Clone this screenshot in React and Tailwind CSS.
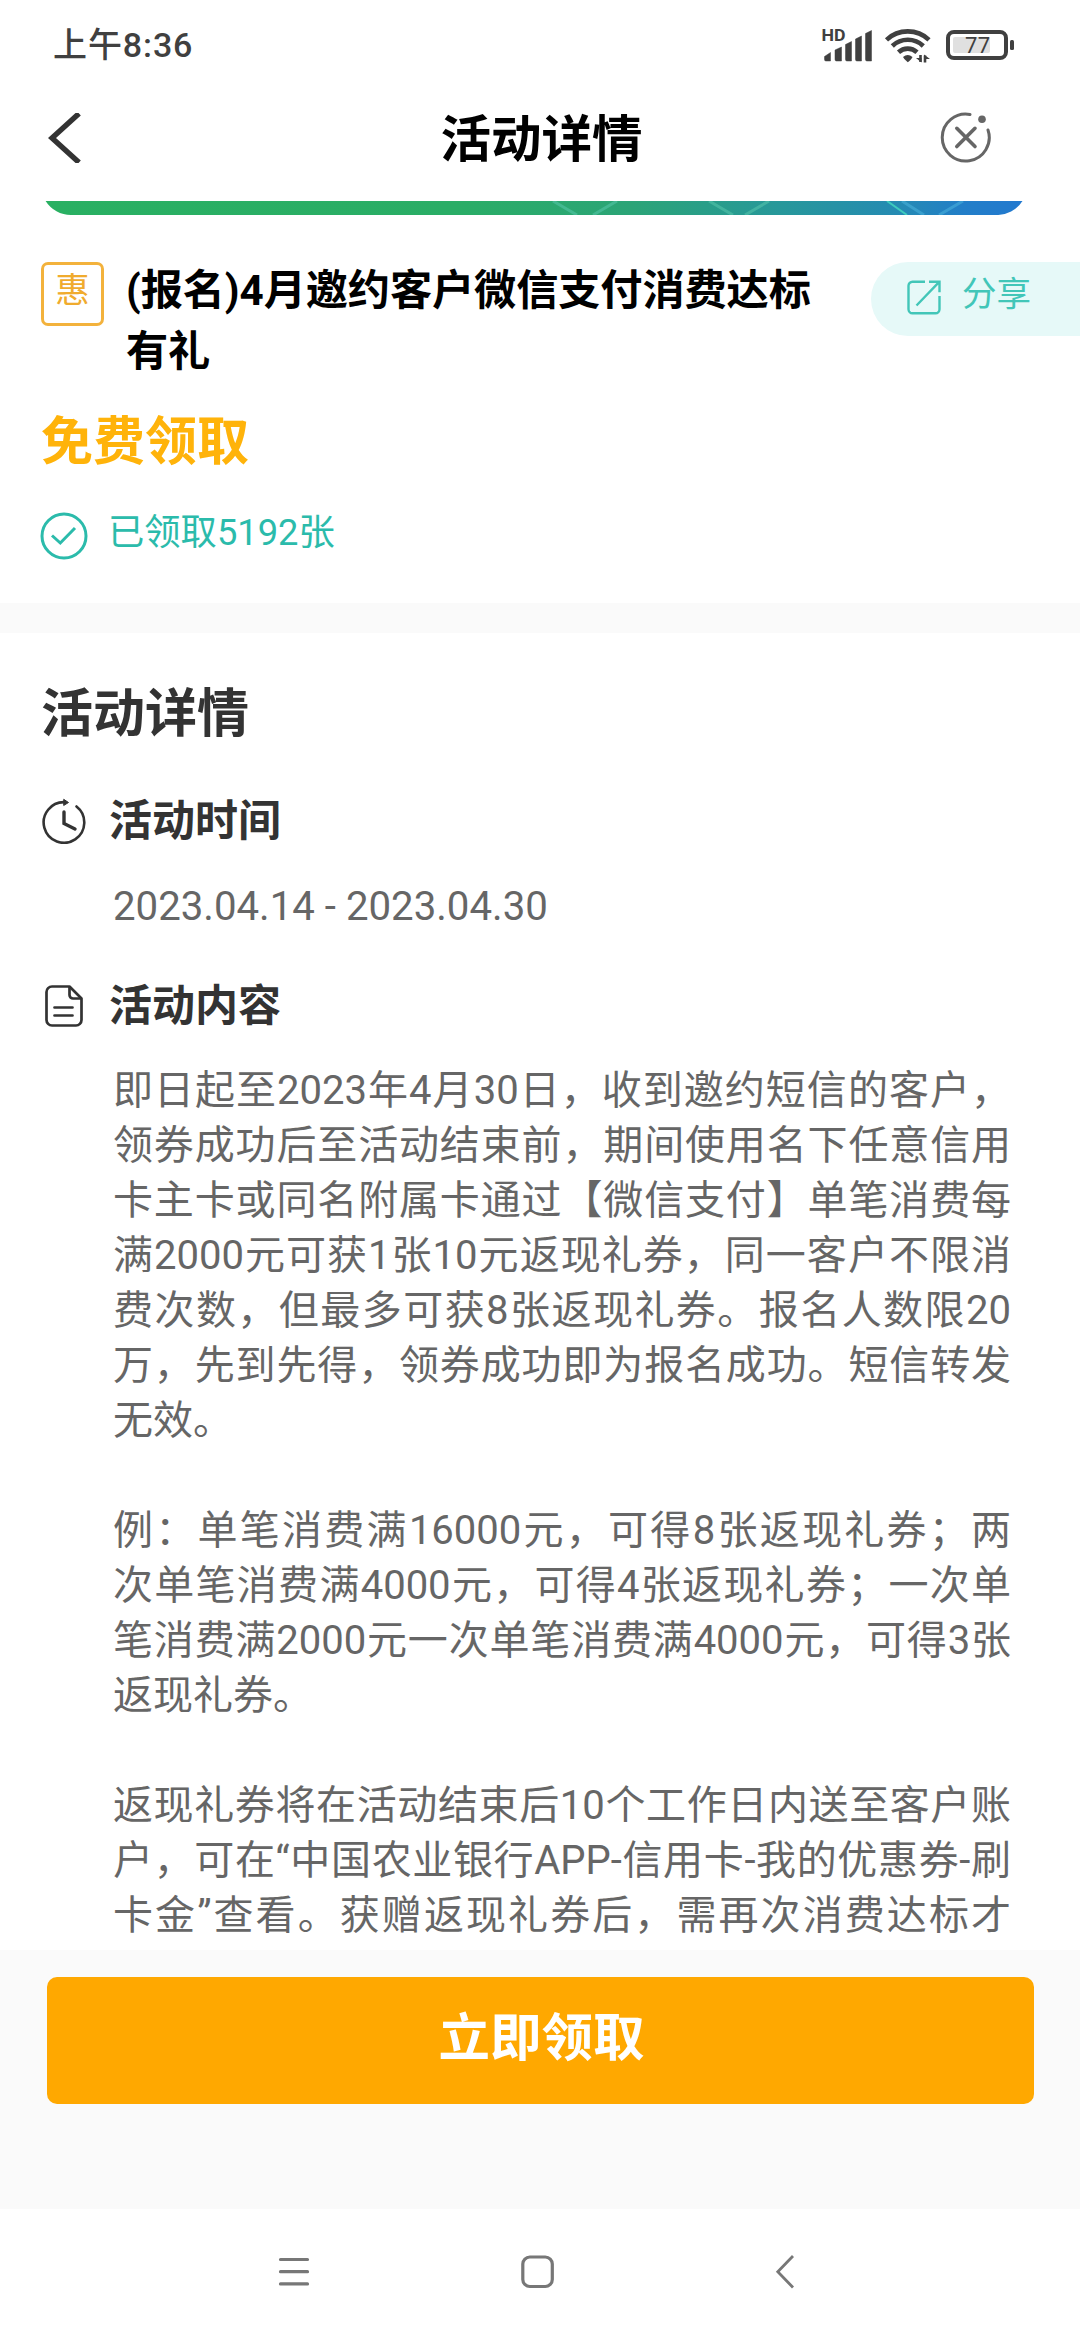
const contentLines = [
  { text: "即日起至2023年4月30日，收到邀约短信的客户，", full: true },
  { text: "领券成功后至活动结束前，期间使用名下任意信用", full: true },
  { text: "卡主卡或同名附属卡通过【微信支付】单笔消费每", full: true },
  { text: "满2000元可获1张10元返现礼券，同一客户不限消", full: true },
  { text: "费次数，但最多可获8张返现礼券。报名人数限20", full: true },
  { text: "万，先到先得，领券成功即为报名成功。短信转发", full: true },
  { text: "无效。" },
  { text: "" },
  { text: "例：单笔消费满16000元，可得8张返现礼券；两", full: true },
  { text: "次单笔消费满4000元，可得4张返现礼券；一次单", full: true },
  { text: "笔消费满2000元一次单笔消费满4000元，可得3张", full: true },
  { text: "返现礼券。" },
  { text: "" },
  { text: "返现礼券将在活动结束后10个工作日内送至客户账", full: true },
  { text: "户，可在“中国农业银行APP-信用卡-我的优惠券-刷", full: true },
  { text: "卡金”查看。获赠返现礼券后，需再次消费达标才", full: true },
];

function StatusBar() {
  return (
    <div className="flex h-[90px] shrink-0 items-center justify-between pl-[53px] pr-[65px] text-[#404040]">
      <span className="text-[34px] font-medium leading-none tracking-[0.9px]">上午8:36</span>
      <svg width="194" height="36" viewBox="821 26 194 36" fill="#404040">
        {/* HD + señal */}
        <text x="821.5" y="40" fontSize="16" fontWeight="700" fontFamily="Roboto" textLength="24" lengthAdjust="spacingAndGlyphs">HD</text>
        <path d="M824.5 55.5l6-4v8.500h-4.500q-1.500 0-1.500-1.500zM835 49l6.500-3v14h-5q-1.500 0-1.500-1.500zM845.500 43.500l6-3v19.500h-4.500q-1.500 0-1.500-1.500zM855.500 38l6-3v25h-4.500q-1.500 0-1.500-1.500zM865.500 32.500l6-3v30.500h-4.500q-1.500 0-1.500-1.500z" stroke="#404040" strokeWidth="0.5" strokeLinejoin="round" />
        {/* wifi */}
        <g fill="none" stroke="#404040" strokeWidth="4.6">
          <path d="M886.500 38.800a31 31 0 0 1 42.500 0" />
          <path d="M892.300 45a22.500 22.500 0 0 1 31 0" />
          <path d="M898.500 51.300a13.600 13.600 0 0 1 18.500 0" />
        </g>
        <path d="M903 56q4.700-3.800 9.500 0q-0.500 2-4.700 5.200q-4-3-4.800-5.200z" />
        <path d="M920.500 54v7M925 54.500v7" fill="none" stroke="#404040" strokeWidth="2.600" />
        <path d="M921.500 61.500l-5.500-4.500h5.500zM924 53.500l6 4.500h-6z" />
        {/* batería */}
        <rect x="948" y="31" width="58" height="26" rx="6" fill="none" stroke="#404040" strokeWidth="4" />
        <rect x="953" y="36" width="37" height="16" rx="2" fill="#e0e0e0" />
        <rect x="1010" y="39" width="4" height="10" rx="1.500" />
        <text x="965" y="52" fontSize="22" fontFamily="Roboto" textLength="25">77</text>
      </svg>
    </div>
  );
}

function NavHeader() {
  return (
    <header className="flex h-[96px] shrink-0 items-center justify-between pl-[48px] pr-[89px]">
      <svg width="33" height="50" viewBox="0 0 33 50" fill="none" stroke="#333" strokeWidth="5.4">
        <path d="M31 0.500L4 25L31 49.500" />
      </svg>
      <h1 className="ml-[62px] mt-[4px] text-[50.5px] font-bold leading-none text-black">活动详情</h1>
      <svg className="-mt-[2px]" width="51" height="51" viewBox="0 0 51 51" fill="none" stroke="#666" strokeLinecap="round">
        <path d="M30 2.400A23.500 23.500 0 1 0 48 18" strokeWidth="3" />
        <path d="M16.800 16.300l18.200 18.200M35 16.300L16.800 34.500" strokeWidth="3.600" />
        <circle cx="42" cy="7.300" r="3.800" fill="#666" stroke="none" />
      </svg>
    </header>
  );
}

function BannerEdge() {
  return (
    <svg className="ml-[41px] mt-[15px] block shrink-0" width="985" height="14" viewBox="0 0 985 14">
      <defs>
        <linearGradient id="banner" x1="0" x2="1" y1="0" y2="0">
          <stop offset="0" stopColor="#29b062" />
          <stop offset="0.42" stopColor="#2aad66" />
          <stop offset="0.6" stopColor="#2ba477" />
          <stop offset="0.75" stopColor="#27989a" />
          <stop offset="0.87" stopColor="#258bb2" />
          <stop offset="0.94" stopColor="#227ec8" />
          <stop offset="1" stopColor="#2279cf" />
        </linearGradient>
      </defs>
      <path d="M4.600 0A30 30 0 0 0 30 14H955A30 30 0 0 0 981.500 0Z" fill="url(#banner)" />
      <g fill="none" strokeWidth="3" stroke="#5ccbb0" opacity="0.5">
        <path d="M512 0l24 14M576 0l-24 14" />
        <path d="M668 0l24 14M728 0l-24 14" />
        <path d="M861 0l22 14M922 0l-24 14" stroke="#4fb8e0" />
      </g>
      <path d="M846 0l20 14" stroke="#3ecbbd" strokeWidth="2" fill="none" />
    </svg>
  );
}

function ShareButton() {
  return (
    <button className="flex h-[74px] w-[209px] items-center rounded-l-full bg-[#e6f9f8] pl-[36px] text-[#42c6b8]">
      <svg className="-mt-[3px]" width="35" height="35" viewBox="0 0 35 35" fill="none" stroke="currentColor" strokeWidth="2.4">
        <path d="M18 1.700H5.500a4 4 0 0 0-4 4v23.500a4 4 0 0 0 4 4h23a4 4 0 0 0 4-4V16" />
        <path d="M22 1.700h10.500v10.500M32 2.200L9.500 25.500" />
      </svg>
      <span className="-mt-[10px] ml-[20px] text-[34.5px] leading-none">分享</span>
    </button>
  );
}

function Summary() {
  return (
    <section className="h-[388px] shrink-0 pt-[47px]">
      <div className="flex items-start">
        <span className="ml-[41px] flex h-[64px] w-[63px] items-center justify-center rounded-[7px] border-[3px] border-[#f3b23c] pb-[7px] text-[34.5px] leading-none text-[#f0ab2e]">
          惠
        </span>
        <h2 className="-mt-[2px] ml-[22px] flex-1 whitespace-nowrap text-[42.2px] font-bold leading-[61px] tracking-[-0.1px] text-black">
          (报名)4月邀约客户微信支付消费达标
          <br />
          有礼
        </h2>
        <ShareButton />
      </div>
      <p className="ml-[41px] mt-[31px] text-[52px] font-bold leading-[60px] text-[#ffb30a]">免费领取</p>
      <div className="ml-[40px] mt-[39px] flex items-center text-[#2bbbab]">
        <svg width="48" height="48" viewBox="0 0 48 48" fill="none" stroke="currentColor" strokeWidth="3">
          <circle cx="24" cy="24" r="22" />
          <path d="M12 23.500l8.300 7.500L35 16" />
        </svg>
        <span className="-mt-[5px] ml-[20px] text-[36.3px] leading-none">已领取5192张</span>
      </div>
    </section>
  );
}

function ClockIcon() {
  return (
    <svg width="44" height="46" viewBox="0 0 44 46" fill="none" stroke="#333" strokeWidth="2.6" strokeLinecap="round">
      <path d="M23 4.200A20.300 20.300 0 1 0 34.500 8.500" />
      <path d="M22 1.500l4.500 3-4.500 2.800z" fill="#333" strokeWidth="1" />
      <path d="M22 14v11.500l11 5.500" strokeWidth="3.400" />
    </svg>
  );
}

function DocIcon() {
  return (
    <svg width="38" height="42" viewBox="0 0 38 42" fill="none" stroke="#333" strokeWidth="2.700" strokeLinejoin="round">
      <path d="M24.500 1.500H7a5.500 5.500 0 0 0-5.500 5.500v28A5.500 5.500 0 0 0 7 40.500h24a5.500 5.500 0 0 0 5.500-5.500V13.500z" />
      <path d="M24.500 1.500V10a3.500 3.500 0 0 0 3.500 3.500h8.500" />
      <path d="M9.500 22.500h18M9.500 30.500h18" strokeLinecap="round" />
    </svg>
  );
}

function Detail() {
  return (
    <section className="min-h-0 flex-1 overflow-hidden bg-white pt-[52px] text-[#333]">
      <h2 className="ml-[41px] text-[52px] font-bold leading-[60px]">活动详情</h2>

      <div className="ml-[42px] mt-[46px] flex h-[60px] items-center">
        <ClockIcon />
        <h3 className="mt-[1px] ml-[23px] text-[43px] font-bold leading-none">活动时间</h3>
      </div>
      <p className="ml-[113px] mt-[28px] text-[40.2px] leading-[55px] text-[#666]">2023.04.14 - 2023.04.30</p>

      <div className="ml-[42px] mt-[42px] flex h-[60px] items-center">
        <span className="flex w-[44px] justify-center">
          <DocIcon />
        </span>
        <h3 className="ml-[23px] text-[43px] font-bold leading-none">活动内容</h3>
      </div>
      <div className="ml-[113px] mt-[27px] w-[898px] text-[40px] leading-[55px] text-[#666]">
        {contentLines.map((line, i) => (
          <p
            key={i}
            className={
              line.full
                ? "h-[55px] whitespace-nowrap [text-align-last:justify]"
                : "h-[55px] whitespace-nowrap"
            }
          >
            {line.text}
          </p>
        ))}
      </div>
    </section>
  );
}

function SystemNav() {
  return (
    <nav className="flex h-[131px] shrink-0 items-start pl-[278px] pt-[46px]">
      <svg width="32" height="34" viewBox="0 0 32 34" stroke="#777" strokeWidth="3.2" strokeLinecap="round">
        <path d="M2.500 4.500h27M2.500 16.700h27M2.500 28.900h27" />
      </svg>
      <svg className="ml-[211px]" width="34" height="34" viewBox="0 0 34 34" fill="none" stroke="#777" strokeWidth="3.200">
        <rect x="1.800" y="2" width="29.500" height="29.500" rx="7" />
      </svg>
      <svg className="ml-[220px]" width="20" height="34" viewBox="0 0 20 34" fill="none" stroke="#777" strokeWidth="2.800">
        <path d="M18 1L2.800 16.700L18 32.500" />
      </svg>
    </nav>
  );
}

export default function App() {
  return (
    <div className="flex h-[2340px] w-[1080px] flex-col overflow-hidden bg-white font-[Roboto,'Noto_Sans_CJK_SC',sans-serif]">
      <StatusBar />
      <NavHeader />
      <BannerEdge />
      <Summary />
      <div className="h-[30px] shrink-0 bg-[#fafafa]" />
      <Detail />

      <footer className="h-[259px] shrink-0 bg-[#fafafa] pl-[47px] pr-[46px] pt-[27px]">
        <button className="flex h-[127px] w-full items-center justify-center rounded-[10px] bg-[#ffa800] pb-[4px] pl-[2px] text-[51.5px] font-bold leading-none text-white">
          立即领取
        </button>
      </footer>
      <SystemNav />
    </div>
  );
}
